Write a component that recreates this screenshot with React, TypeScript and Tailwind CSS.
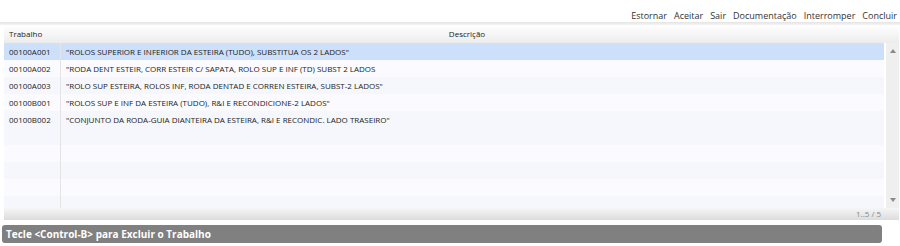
import React from 'react';

const rows = [
    { id: '00100A001', desc: '"ROLOS SUPERIOR E INFERIOR DA ESTEIRA (TUDO), SUBSTITUA OS 2 LADOS"' },
    { id: '00100A002', desc: '"RODA DENT ESTEIR, CORR ESTEIR C/ SAPATA, ROLO SUP E INF (TD) SUBST 2 LADOS' },
    { id: '00100A003', desc: '"ROLO SUP ESTEIRA, ROLOS INF, RODA DENTAD E CORREN ESTEIRA, SUBST-2 LADOS"' },
    { id: '00100B001', desc: '"ROLOS SUP E INF DA ESTEIRA (TUDO), R&I E RECONDICIONE-2 LADOS"' },
    { id: '00100B002', desc: '"CONJUNTO DA RODA-GUIA DIANTEIRA DA ESTEIRA, R&I E RECONDIC. LADO TRASEIRO"' },
];

const actions = ['Estornar', 'Aceitar', 'Sair', 'Documentação', 'Interromper', 'Concluir'];

export default function App() {
    const empty = Array.from({ length: 5 });

    return (
        <div className="w-[900px] h-[246px] bg-white text-[8px] text-[#222] overflow-hidden" style={{ fontFamily: '"Open Sans", sans-serif' }}>
            {/* Toolbar */}
            <div className="h-[22px] flex items-end justify-end gap-[7px] pr-[3px] text-[9px] text-[#333]">
                {actions.map((a) => (
                    <span key={a}>{a}</span>
                ))}
            </div>
            <div className="h-[3px] bg-gradient-to-b from-[#e4e4e4] to-[#f4f4f4]" />

            {/* Grid */}
            <div className="ml-[4px] mr-[1px] flex flex-col">
                <div className="h-[18px] flex items-center bg-gradient-to-b from-white to-[#ececec]">
                    <div className="w-[57px] pl-[5px]">Trabalho</div>
                    <div className="flex-1 text-center pr-[26px]">Descrição</div>
                </div>
                <div className="flex h-[165px]">
                    <div className="flex-1 flex flex-col">
                        {rows.map((r, i) => (
                            <div
                                key={r.id}
                                className={`h-[17px] shrink-0 flex items-center ${i === 0 ? 'bg-[#cce0fb]' : i % 2 === 1 ? 'bg-[#fafaff]' : 'bg-[#f5f7fc]'}`}
                            >
                                <div className="w-[57px] pl-[5px] h-full flex items-center border-r border-[#e4e4e4]">{r.id}</div>
                                <div className="pl-[5px]">{r.desc}</div>
                            </div>
                        ))}
                        {empty.map((_, i) => (
                            <div key={i} className={`h-[17px] shrink-0 flex ${i % 2 === 0 ? 'bg-[#f5f7fc]' : 'bg-[#fafaff]'}`}>
                                <div className="w-[57px] h-full border-r border-[#e4e4e4]" />
                            </div>
                        ))}
                    </div>
                    <div className="w-[13px] ml-[2px] bg-[#efefef] flex flex-col justify-between items-center pt-[6px] pb-[6px]">
                        <svg width="6" height="4" viewBox="0 0 6 4"><path d="M0 4 L3 0 L6 4 Z" fill="#8a8a8a" /></svg>
                        <svg width="6" height="4" viewBox="0 0 6 4"><path d="M0 0 L3 4 L6 0 Z" fill="#8a8a8a" /></svg>
                    </div>
                </div>
                <div className="h-[12px] flex items-center justify-end pr-[18px] bg-gradient-to-b from-[#f6f6f6] to-[#dcdcdc] text-[#888]">
                    1..5 / 5
                </div>
            </div>

            {/* Status bar */}
            <div className="ml-[2px] mt-[5px] w-[880px] h-[18px] rounded-[3px] bg-[#808080] text-white font-bold text-[10px] flex items-center pl-[4px]">
                Tecle &lt;Control-B&gt; para Excluir o Trabalho
            </div>
        </div>
    );
}
